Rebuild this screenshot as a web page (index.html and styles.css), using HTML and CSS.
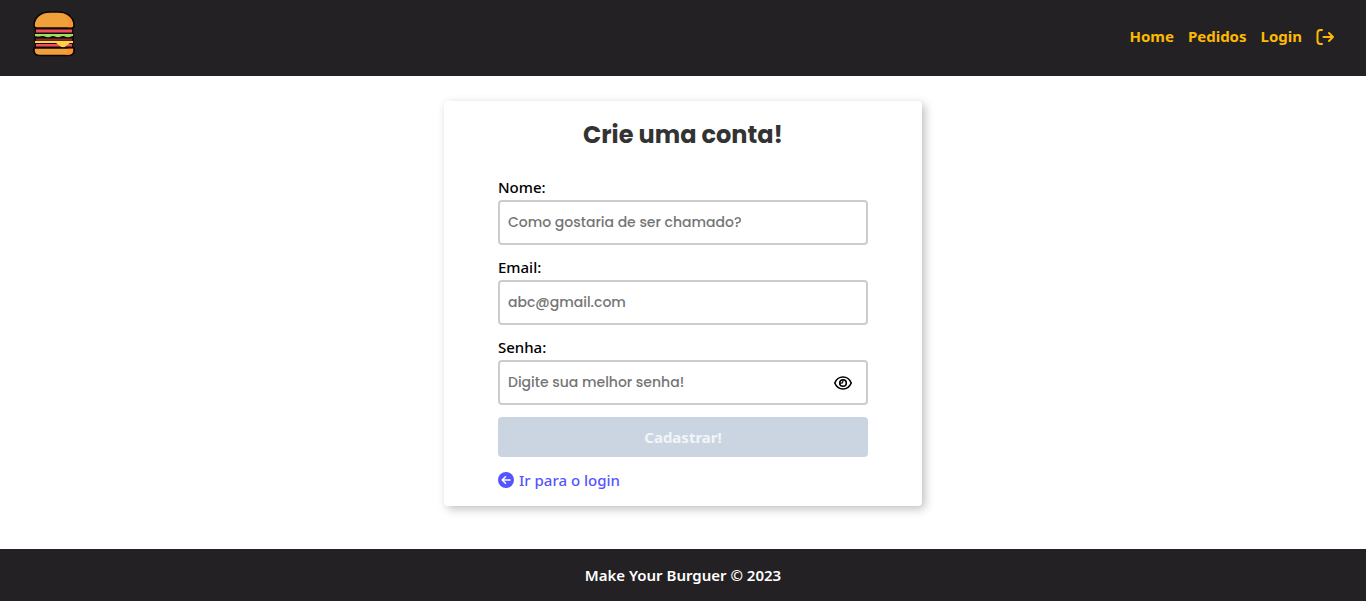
FILE: index.html
```html
<!DOCTYPE html>
<html lang="pt-BR">
<head>
<meta charset="utf-8">
<meta name="viewport" content="width=device-width, initial-scale=1">
<title>Make Your Burguer</title>
<link rel="stylesheet" href="styles.css">
</head>
<body>
<header class="header">
  <a class="logo" href="#" aria-label="Make Your Burguer">
    <svg class="logo-image" viewBox="-1 0 44 46" aria-hidden="true">
      <path d="M2 16h38l1 12-1 11H2L1 28z" fill="#17090b"/>
      <path d="M1 14.500C1 6 8 1 17 1h8c9 0 16 5 16 13.500 0 1.500-1 2.500-2.500 2.500h-35C2 17 1 16 1 14.500z" fill="#f0a03a" stroke="#0c0608" stroke-width="1.600"/>
      <path d="M28 2C35 3.400 40 8 40 14.500c0 1-.6 1.700-1.500 1.700h-3.300C38 11 34 5 28 2z" fill="#fb922d"/>
      <path d="M3 18.500h36v3H3z" fill="#ef4f58"/>
      <path d="M2 23h38v2c-2 0-3 1.300-5 1.300S32 25 30 25s-3 1.300-5 1.300S22 25 20 25s-3 1.300-5 1.300S12 25 10 25s-4 1.300-8 0z" fill="#98e35a"/>
      <path d="M3 27.500h36v2.200H3z" fill="#7d2b30"/>
      <path d="M3 33h36v2.500H3z" fill="#ef4f58"/>
      <path d="M2 30h38v2h-3l-5 3.700c-1 .9-3 .9-4 0L23 32H2z" fill="#ffd43f"/>
      <path d="M1 37h40v2.500c0 3-2 5-6 5H7c-4 0-6-2-6-5z" fill="#f0a03a" stroke="#0c0608" stroke-width="1.600"/>
      <path d="M35 37.800h5v1.700c0 2.800-2 4.200-5 4.200h-3c2-1 3-3 3-5.900z" fill="#fb922d"/>
    </svg>
  </a>
  <nav class="nav">
    <a class="nav-link" href="#">Home</a>
    <a class="nav-link" href="#">Pedidos</a>
    <a class="nav-link" href="#">Login</a>
    <button class="logout" type="button" aria-label="Sair">
      <svg class="logout-icon" viewBox="0 0 18 16" fill="none" stroke="currentColor" stroke-width="2" stroke-linecap="round" stroke-linejoin="round" aria-hidden="true">
        <path d="M6 1H4.500C2.800 1 1.500 2.300 1.500 4v8c0 1.700 1.300 3 3 3H6M7.500 8H17M13 4l4 4-4 4"/>
      </svg>
    </button>
  </nav>
</header>
<main class="main">
  <section class="card">
    <h1 class="title">Crie uma conta!</h1>
    <form class="form">
      <div class="field">
        <label class="label" for="nome">Nome:</label>
        <input class="input" id="nome" type="text" placeholder="Como gostaria de ser chamado?">
      </div>
      <div class="field">
        <label class="label" for="email">Email:</label>
        <input class="input" id="email" type="email" placeholder="abc@gmail.com">
      </div>
      <div class="field">
        <label class="label" for="senha">Senha:</label>
        <div class="password">
          <input class="input input-password" id="senha" type="password" placeholder="Digite sua melhor senha!">
          <button class="reveal" type="button" aria-label="Mostrar senha">
            <svg class="reveal-icon" viewBox="0 0 18 16" fill="none" stroke="currentColor" stroke-width="1.600" aria-hidden="true">
              <path d="M.8 8C2.300 4.200 5.500 2 9 2s6.700 2.200 8.200 6c-1.500 3.800-4.700 6-8.200 6S2.300 11.800.8 8z" stroke-linejoin="round"/>
              <circle cx="9" cy="8" r="3.300"/>
              <path d="M8.900 5v1.500c0 1-.7 1.700-1.700 1.700H6" stroke-width="1.200"/>
            </svg>
          </button>
        </div>
      </div>
      <button class="submit" type="submit" disabled>Cadastrar!</button>
    </form>
    <a class="back" href="#">
      <svg class="back-icon" viewBox="0 0 16 16" aria-hidden="true">
        <circle cx="8" cy="8" r="8" fill="currentColor"/>
        <path d="M12 8H4.500M7.500 4.700L4.200 8l3.300 3.300" fill="none" stroke="#fff" stroke-width="1.500" stroke-linecap="round" stroke-linejoin="round"/>
      </svg>
      <span>Ir para o login</span>
    </a>
  </section>
</main>
<footer class="footer">Make Your Burguer © 2023</footer>
</body>
</html>
```
FILE: styles.css
```css
* {
  box-sizing: border-box;
}

body {
  display: flex;
  flex-direction: column;
  min-height: 100vh;
  margin: 0;
  background: #fff;
  color: #000;
  font-family: "Segoe UI", "Noto Sans", sans-serif;
  font-size: 15px;
  line-height: 20px;
}

.header {
  display: flex;
  align-items: center;
  justify-content: space-between;
  padding: 11px 32px 19px;
  background: #242124;
}

.logo,
.logo-image {
  display: block;
}

.logo-image {
  width: 44px;
  height: 46px;
}

.nav {
  display: flex;
  align-items: center;
  gap: 14px;
  padding-top: 6px;
}

.nav-link {
  padding-bottom: 2px;
  color: #fcba03;
  font-weight: 700;
  text-decoration: none;
}

.logout,
.reveal {
  display: flex;
  padding: 0;
  border: 0;
  background: none;
  cursor: pointer;
}

.logout {
  color: #fcba03;
}

.logout-icon,
.reveal-icon {
  width: 18px;
  height: 16px;
}

.main {
  flex: 1;
  padding: 25px 0 43px;
}

.card {
  width: 35%;
  min-width: 320px;
  margin: 0 auto;
  padding: 16px 54px;
  border-radius: 4px;
  background: #fff;
  box-shadow: 3px 3px 10px rgba(0, 0, 0, 0.25);
}

.title {
  margin: 0 0 24px;
  color: #333;
  font-family: Poppins, Inter, sans-serif;
  font-size: 24px;
  font-weight: 700;
  line-height: 36px;
  text-align: center;
}

.form {
  display: flex;
  flex-direction: column;
  gap: 12px;
}

.field {
  display: flex;
  flex-direction: column;
  gap: 3px;
}

.label {
  font-weight: 500;
}

.input {
  width: 100%;
  height: 45px;
  padding: 0 8px;
  border: 2px solid #ccc;
  border-radius: 4px;
  background: #fff;
  font-family: Poppins, Inter, sans-serif;
  font-size: 14px;
  font-weight: 500;
}

.input::placeholder {
  color: #757575;
}

.password {
  display: grid;
  align-items: center;
}

.password > * {
  grid-area: 1 / 1;
}

.input-password {
  padding-right: 44px;
}

.reveal {
  justify-self: end;
  margin-right: 16px;
  color: #000;
}

.submit {
  height: 40px;
  border: 0;
  border-radius: 4px;
  background: #cbd5e1;
  color: #f1f5f9;
  font-family: inherit;
  font-size: 15px;
  font-weight: 700;
}

.back {
  display: flex;
  align-items: center;
  gap: 5px;
  width: fit-content;
  margin-top: 13px;
  color: #5555ff;
  font-weight: 500;
  text-decoration: none;
}

.back-icon {
  width: 16px;
  height: 16px;
}

.footer {
  padding: 16px;
  background: #242124;
  color: #fff;
  font-weight: 600;
  text-align: center;
}
```
